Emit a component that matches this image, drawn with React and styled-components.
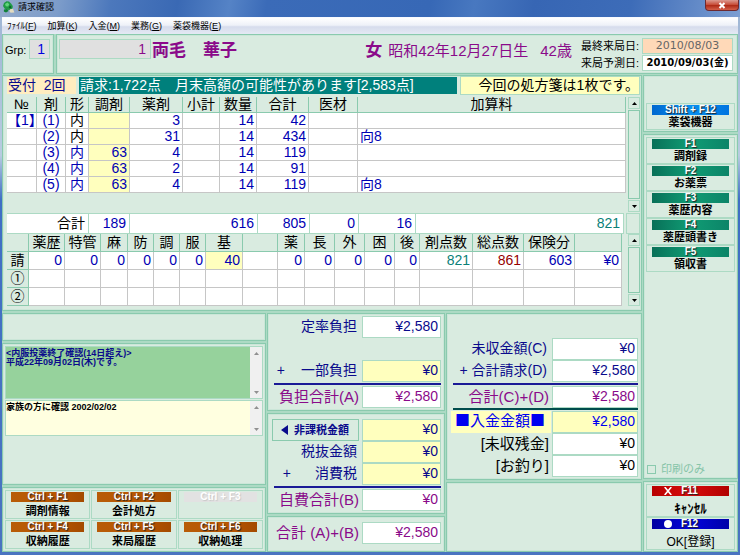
import React from 'react';
import styled, { createGlobalStyle } from 'styled-components';

const color = {
    face: '#d9ebe0',
    line: '#8acaae',
    soft: '#acdac4',
    grid: '#c6c6c6',
    yellow: '#ffffbe',
    navy: '#0a0a8c',
    blue: '#0000b4',
    purple: '#8a0a8a',
    teal: '#0a8078',
    red: '#960000',
};

const GlobalStyle = createGlobalStyle`
    * { box-sizing: border-box; }

    body {
        margin: 0;
        background: #4a74c0;
        font-family: "Liberation Sans", "Noto Sans CJK JP", sans-serif;
        font-size: 14px;
        line-height: 16px;
        color: #000;
    }

    button, input, textarea {
        font: inherit;
        color: inherit;
        margin: 0;
        padding: 0;
        border: 0;
        border-radius: 0;
        outline: 0;
    }
`;

const Window = styled.div`
    display: flex;
    flex-direction: column;
    min-height: 100vh;
    padding: 0 2px 3px;
    background: linear-gradient(#9db4d4, #b8cce0 28%, #3f6fc4 36%, #4a74c0);
`;

const TitleBar = styled.header`
    display: flex;
    align-items: flex-start;
    gap: 3px;
    height: 17px;
    margin: 0 -2px;
    padding-left: 2px;
    background: linear-gradient(100deg, #93aacb 0, #7c9cca 8%, #4c78bc 15%, #3a69b4 24%, #5583c6 31%,
        #3b6bb8 36%, #3768b6 58%, #4878c0 64%, #3766b4 72%, #3d6cb8 85%, #7c9ed2 100%);
`;

const Title = styled.h1`
    flex: 1;
    margin: 0;
    font-size: 9px;
    font-weight: 400;
    line-height: 14px;
`;

const CloseButton = styled.button`
    display: flex;
    align-items: center;
    justify-content: center;
    width: 34px;
    height: 11px;
    margin-right: 1px;
    border: 1px solid #6e2a30;
    border-top: 0;
    border-radius: 0 0 4px 4px;
    background: linear-gradient(#dc9a90, #c8503c 45%, #b02c18 55%, #d4604a);
`;

const MenuBar = styled.nav`
    display: flex;
    gap: 11px;
    height: 17px;
    padding: 0 5px;
    border-top: 1px solid #f8faff;
    background: linear-gradient(#fff, #eef1f8 45%, #d6dcec 55%, #e4e9f4);
`;

const MenuButton = styled.button`
    background: none;
    font-size: 9px;
    line-height: 15px;
    white-space: nowrap;
`;

const Panel = styled.section`
    border: 1px solid ${color.line};
    background: ${color.face};
    box-shadow: inset 0 0 0 1px #cbe6d8;
`;

const Header = styled.div`
    display: flex;
    gap: 2px;
    height: 41px;
    padding-bottom: 1px;
    background: ${color.soft};
`;

const GroupPanel = styled(Panel)`
    display: flex;
    align-items: flex-start;
    justify-content: space-between;
    width: 52px;
    padding: 4px 3px 0 2px;
`;

const GroupLabel = styled.label`
    font-size: 11px;
    line-height: 22px;
`;

const CodeInput = styled.input`
    width: ${props => props.$width}px;
    height: 20px;
    padding-right: 4px;
    border: 1px solid ${color.soft};
    background: #e0e0e0;
    color: ${props => props.$tone};
    text-align: right;
`;

const PatientPanel = styled(Panel)`
    flex: 1;
    display: flex;
    align-items: flex-start;
    padding: 3px 4px 0 2px;
`;

const CodeWrapper = styled.div`
    padding: 1px 0 0;
`;

const PatientName = styled.strong`
    flex: 1;
    padding-left: 1px;
    color: ${color.purple};
    font-size: 17px;
    line-height: 25px;
`;

const PatientInfo = styled.div`
    display: flex;
    gap: 12px;
    padding-right: 9px;
    color: ${color.purple};
    font-size: 15px;
    line-height: 25px;
`;

const Sex = styled.strong`
    margin-right: -6px;
    font-size: 17px;
`;

const VisitDates = styled.dl`
    display: grid;
    grid-template-columns: auto 91px;
    gap: 1px 3px;
    margin: 0;
    font-size: 11px;
    line-height: 16px;
`;

const DateLabel = styled.dt`
    text-align: right;
`;

const DateValue = styled.dd`
    height: 16px;
    margin: 0;
    border: 1px solid ${color.soft};
    background: ${props => (props.$last ? '#ffd9b8' : '#fff')};
    color: ${props => (props.$last ? '#666' : '#000')};
    font-family: "DejaVu Sans", "Noto Sans CJK JP", sans-serif;
    font-size: ${props => (props.$last ? 11 : 10)}px;
    font-weight: ${props => (props.$last ? 400 : 700)};
    line-height: 14px;
    text-align: center;
    white-space: nowrap;
`;

const Body = styled.div`
    flex: 1;
    display: flex;
    background: ${color.soft};
`;

const Main = styled.main`
    flex: 1;
    display: flex;
    flex-direction: column;
    gap: 2px;
    min-width: 0;
`;

const ClaimPanel = styled(Panel)`
    padding: 0 1px 4px 4px;
`;

const NoticeRow = styled.div`
    display: flex;
    align-items: center;
    gap: 3px;
    height: 19px;
    margin-bottom: 2px;
    white-space: nowrap;
`;

const Reception = styled.div`
    width: 69px;
    padding-left: 1px;
    background: #ffedc0;
    color: ${color.navy};
    line-height: 17px;
`;

const Alert = styled.div`
    flex: 1;
    padding-left: 1px;
    background: #00807c;
    color: #fff;
    line-height: 17px;
`;

const Prescription = styled.div`
    width: 180px;
    border: 1px solid ${color.soft};
    background: ${color.yellow};
    line-height: 17px;
    text-align: right;
`;

const TableFrame = styled.div`
    display: flex;
    align-items: stretch;
    gap: ${props => props.$gap}px;
    min-height: ${props => props.$height}px;
`;

const TableArea = styled.div`
    flex: 1;
    min-width: 0;
`;

const Table = styled.table`
    width: 100%;
    table-layout: fixed;
    border-collapse: separate;
    border-spacing: 0;
    line-height: ${props => props.$row - 1}px;
    white-space: nowrap;

    th, td {
        height: ${props => props.$row}px;
    }
`;

const Th = styled.th`
    padding: 0;
    overflow: hidden;
    border-right: 1px solid ${color.line};
    border-bottom: 1px solid ${color.line};
    background: ${color.face};
    font-weight: 400;
    text-align: center;
`;

const Td = styled.td`
    padding: 0 ${props => (props.$align === 'center' ? 0 : 2)}px;
    border-right: 1px solid ${color.grid};
    border-bottom: 1px solid ${color.grid};
    background: ${props => (props.$mark ? color.yellow : '#fff')};
    color: ${props => props.$tone || color.blue};
    text-align: ${props => props.$align || 'right'};
`;

const SumTable = styled(Table)`
    margin-top: 1px;

    td {
        border: 1px solid ${color.soft};
        border-left-width: 0;
        padding-right: 3px;
    }
`;

const SumEnd = styled.div`
    width: 14px;
    margin-top: 1px;
    border: 1px solid ${color.soft};
`;

const Scroll = styled.div`
    display: flex;
    flex-direction: column;
    gap: 1px;
    width: 12px;
    background: ${props => (props.$plain ? '#f0f0f0' : 'transparent')};
`;

const ScrollButton = styled.button`
    display: flex;
    align-items: center;
    justify-content: center;
    height: 12px;
    border: ${props => (props.$plain ? 0 : 1)}px solid ${color.soft};
    background: transparent;
    color: ${props => (props.$plain ? '#909090' : '#000')};
`;

const ScrollTrack = styled.div`
    flex: 1;
    border: ${props => (props.$plain ? 0 : 1)}px solid ${color.line};
`;

const Bottom = styled.div`
    flex: 1;
    display: grid;
    grid-template-columns: 264fr 178fr 196fr;
    gap: 1px;
`;

const Column = styled.div`
    display: flex;
    flex-direction: column;
    gap: 2px;
    min-width: 0;
`;

const EmptyPanel = styled(Panel)`
    height: ${props => (props.$height ? props.$height + 'px' : 'auto')};
    flex: ${props => (props.$height ? 'none' : 1)};
`;

const MemoPanel = styled(Panel)`
    flex: 1;
    padding: 2px;
`;

const Memo = styled.div`
    display: flex;
    height: ${props => props.$height}px;
    margin-bottom: 1px;
    border: 1px solid ${color.soft};
`;

const MemoText = styled.textarea`
    flex: 1;
    min-width: 0;
    padding-top: 2px;
    overflow: hidden;
    resize: none;
    background: ${props => props.$fill};
    color: ${props => props.$tone};
    font-size: 9px;
    font-weight: 700;
    line-height: 9px;
`;

const KeyPanel = styled(Panel)`
    display: grid;
    grid-template-columns: repeat(3, 1fr);
    gap: 1px;
    padding: 2px;
`;

const KeyButton = styled.button`
    display: flex;
    flex-direction: column;
    align-items: stretch;
    height: ${props => props.$height}px;
    padding: 1px 5px 0;
    border: 1px solid ${color.soft};
    background: ${color.face};
    font-size: ${props => props.$size || 11}px;
    font-weight: ${props => (props.$size === 12 ? 400 : 700)};
    line-height: 14px;
    text-align: center;
    white-space: nowrap;
`;

const keyFills = {
    orange: 'linear-gradient(90deg, #b85c08, #b85600 60%, #a44a00)',
    green: 'linear-gradient(90deg, #087058, #109c74 50%, #0c8468)',
    blue: 'linear-gradient(90deg, #0068d0, #0890f0 50%, #0074e0)',
    red: 'linear-gradient(90deg, #b80000, #d80c0c 50%, #b00000)',
    navy: 'linear-gradient(90deg, #0000a0, #0404dc 50%, #0000a8)',
    off: '#e2e2e2',
};

const KeyCap = styled.span`
    display: flex;
    align-items: center;
    justify-content: center;
    gap: 9px;
    height: 10px;
    margin-bottom: ${props => props.$space || 0}px;
    padding-right: ${props => (props.$space === 6 ? 19 : 0)}px;
    background: ${props => keyFills[props.$fill]};
    color: #fff;
    font-size: 10px;
    font-weight: 700;
    line-height: 10px;
    text-shadow: 1px 1px 1px ${props => (props.$fill === 'off' ? '#c8c8c8' : '#222')};
`;

const MoneyPanel = styled(Panel)`
    flex: ${props => (props.$grow ? 1 : 'none')};
    padding: ${props => props.$top}px 3px 2px 4px;
`;

const MoneyRow = styled.div`
    display: flex;
    align-items: stretch;
    height: 22px;
    margin-bottom: ${props => (props.$after || 0)}px;
    color: ${props => props.$tone};
`;

const MoneyLabel = styled.label`
    flex: 1;
    display: flex;
    justify-content: flex-end;
    gap: ${props => props.$gap || 0}px;
    margin-right: 1px;
    padding-right: ${props => props.$inset}px;
    background: ${props => (props.$mark ? color.yellow : 'transparent')};
    font-family: ${props => (props.$mark ? '"Noto Sans CJK JP", sans-serif' : 'inherit')};
    font-size: ${props => (props.$big ? 15 : 14)}px;
    line-height: ${props => (props.$mark ? 17 : 21)}px;
    white-space: nowrap;
`;

const MoneyInput = styled.input`
    width: ${props => (props.$wide ? 86 : 79)}px;
    padding: 0 2px 3px;
    border: 1px solid ${color.soft};
    background: ${props => (props.$mark ? color.yellow : '#fff')};
    text-align: right;
`;

const Rule = styled.hr`
    height: 2px;
    margin: ${props => (props.$tight ? 0 : 1)}px 0 1px 2px;
    border: 0;
    background: ${props => props.$tone};
`;

const TaxFreeButton = styled.button`
    flex: 1;
    display: flex;
    align-items: center;
    gap: 6px;
    margin-right: 3px;
    padding-left: 8px;
    border: 1px solid ${color.line};
    background: ${color.face};
    font-size: 11px;
    font-weight: 700;
`;

const Sidebar = styled.aside`
    display: flex;
    flex-direction: column;
    gap: 2px;
    width: 96px;
    padding-left: 1px;
`;

const SidePanel = styled(Panel)`
    display: flex;
    flex-direction: column;
    flex: ${props => (props.$grow ? 1 : 'none')};
    padding: ${props => props.$top}px 2px 1px;
`;

const CheckLabel = styled.label`
    display: flex;
    align-items: center;
    gap: 5px;
    margin-top: auto;
    padding-left: 1px;
    color: #86c4a8;
    font-size: 11px;
`;

const CheckBox = styled.input`
    appearance: none;
    width: 9px;
    height: 9px;
    border: 1px solid ${color.line};
`;

const menus = [['ﾌｧｲﾙ', 'F'], ['加算', 'K'], ['入金', 'M'], ['業務', 'G'], ['薬袋機器', 'E']];

const drugColumns = [
    ['№', 30], ['剤', 29], ['形', 23], ['調剤', 41], ['薬剤', 53], ['小計', 37],
    ['数量', 37], ['合計', 52], ['医材', 49], ['加算料', null],
];

const drugRows = [
    ['【1】', '(1)', '内', '', '3', '', '14', '42', '', ''],
    ['', '(2)', '内', '', '31', '', '14', '434', '', '向8'],
    ['', '(3)', '内', '63', '4', '', '14', '119', '', ''],
    ['', '(4)', '内', '63', '2', '', '14', '91', '', ''],
    ['', '(5)', '内', '63', '4', '', '14', '119', '', '向8'],
];

const feeColumns = [
    ['', 22], ['薬歴', 36], ['特管', 36], ['麻', 27], ['防', 26], ['調', 26], ['服', 26], ['基', 37],
    ['', 35], ['薬', 27], ['長', 30], ['外', 30], ['困', 30], ['後', 25], ['剤点数', 53],
    ['総点数', 51], ['保険分', 51], ['', null],
];

const feeRows = [
    ['請', '0', '0', '0', '0', '0', '0', '40', '', '0', '0', '0', '0', '0', '821', '861', '603', '¥0'],
    ['①', ...Array(17).fill('')],
    ['②', ...Array(17).fill('')],
];

const leftKeys = [
    ['Ctrl + F1', '調剤情報'], ['Ctrl + F2', '会計処方'], ['Ctrl + F3', ''],
    ['Ctrl + F4', '収納履歴'], ['Ctrl + F5', '来局履歴'], ['Ctrl + F6', '収納処理'],
];

const sideKeys = [
    ['F1', '調剤録'], ['F2', 'お薬票'], ['F3', '薬歴内容'], ['F4', '薬歴頭書き'], ['F5', '領収書'],
];

const AppIcon = () => (
    <svg width="13" height="14" viewBox="0 0 13 14" aria-hidden="true">
        <path d="M1 6 2 3 4.5 1.2 7 1.5 9 3.5 10.8 6 10.5 8.5 8 10 5 9.8 2.5 8.5Z" fill="#1f9a45" />
        <path d="M3 4 5.5 2.6 7.2 4.2 6.2 6.4 3.8 6.2Z" fill="#62d47c" />
        <path d="M2 9.4 5 9 6.6 11 4 12.4 1.8 11.4Z" fill="#128038" />
        <path d="M8 9.2 11 8.8 12.4 12.4 8.6 12.8 7.4 11Z" fill="#e4dcc0" />
        <path d="M7.8 5.5 9.6 7 8.2 8.4 6.8 7.4Z" fill="#0c602c" />
    </svg>
);

const Arrow = ({ up }) => (
    <svg width="5" height="3" viewBox="0 0 5 3" aria-hidden="true">
        <path d={up ? 'M0 3 2.5 0 5 3Z' : 'M0 0 5 0 2.5 3Z'} fill="currentColor" />
    </svg>
);

const ScrollBar = ({ plain }) => (
    <Scroll $plain={plain}>
        <ScrollButton $plain={plain} aria-label="上へ"><Arrow up /></ScrollButton>
        <ScrollTrack $plain={plain} />
        <ScrollButton $plain={plain} aria-label="下へ"><Arrow /></ScrollButton>
    </Scroll>
);

const Columns = ({ widths }) => (
    <colgroup>
        {widths.map((width, i) => <col key={i} width={width || undefined} />)}
    </colgroup>
);

const HeadRow = ({ columns }) => (
    <thead>
        <tr>
            {columns.map(([name], i) => <Th key={i} scope="col">{name}</Th>)}
        </tr>
    </thead>
);

const drugAlign = (i) => {
    if (i < 3) return 'center';
    return i === 9 ? 'left' : 'right';
}

const DrugTable = () => (
    <Table $row={16}>
        <Columns widths={drugColumns.map(column => column[1])} />
        <HeadRow columns={drugColumns} />
        <tbody>
            {drugRows.map((row, r) => (
                <tr key={r}>
                    {row.map((value, i) => (
                        <Td key={i} $align={drugAlign(i)} $mark={i === 3} $tone={i === 2 && r < 2 ? '#000' : null}>
                            {value}
                        </Td>
                    ))}
                </tr>
            ))}
        </tbody>
    </Table>
);

const TotalTable = () => (
    <SumTable $row={20}>
        <Columns widths={[82, 41, 128, 52, 49, 57, null]} />
        <tbody>
            <tr>
                <Td $tone="#000">合計</Td>
                <Td>189</Td>
                <Td>616</Td>
                <Td>805</Td>
                <Td>0</Td>
                <Td>16</Td>
                <Td $tone={color.teal}>821</Td>
            </tr>
        </tbody>
    </SumTable>
);

// by column of the fee table, the row name being column 0
const feeTones = { 14: color.teal, 15: color.red };

const FeeTable = () => (
    <Table $row={18}>
        <Columns widths={feeColumns.map(column => column[1])} />
        <HeadRow columns={feeColumns} />
        <tbody>
            {feeRows.map(([name, ...values], r) => (
                <tr key={r}>
                    <Th scope="row">{name}</Th>
                    {values.map((value, i) => (
                        <Td key={i} $mark={value === '40'} $tone={feeTones[i + 1]}>{value}</Td>
                    ))}
                </tr>
            ))}
        </tbody>
    </Table>
);

const Key = ({ cap, fill, height, size, space, icon, children }) => (
    <KeyButton $height={height} $size={size} disabled={fill === 'off'}>
        <KeyCap $fill={fill} $space={space}>{icon}{cap}</KeyCap>
        {children}
    </KeyButton>
);

const Money = ({ id, label, sign, gap, value, tone, mark, markLabel, big, wide, after, inset = 4 }) => (
    <MoneyRow $tone={tone} $after={after}>
        <MoneyLabel htmlFor={id} $gap={gap} $big={big} $mark={markLabel} $inset={inset}>
            {sign && <span>{sign}</span>}
            <span>{label}</span>
        </MoneyLabel>
        <MoneyInput id={id} $mark={mark} $wide={wide} defaultValue={value} />
    </MoneyRow>
);

const App = () => (
    <>
        <GlobalStyle />
        <Window>
            <TitleBar>
                <AppIcon />
                <Title>請求確認</Title>
                <CloseButton aria-label="閉じる">
                    <svg width="8" height="7" viewBox="0 0 8 7" aria-hidden="true">
                        <path d="M1.5 1 6.5 6M6.5 1 1.5 6" stroke="#fff" strokeWidth="2" />
                    </svg>
                </CloseButton>
            </TitleBar>
            <MenuBar>
                {menus.map(([name, key]) => (
                    <MenuButton key={key}>{name}(<u>{key}</u>)</MenuButton>
                ))}
            </MenuBar>
            <Header>
                <GroupPanel>
                    <GroupLabel htmlFor="group">Grp:</GroupLabel>
                    <CodeInput id="group" $width={21} $tone="#0000e0" defaultValue="1" />
                </GroupPanel>
                <PatientPanel>
                    <CodeWrapper>
                        <CodeInput $width={92} $tone={color.purple} aria-label="患者番号" defaultValue="1" />
                    </CodeWrapper>
                    <PatientName>両毛　華子</PatientName>
                    <PatientInfo>
                        <Sex>女</Sex>
                        <span>昭和42年12月27日生</span>
                        <span>42歳</span>
                    </PatientInfo>
                    <VisitDates>
                        <DateLabel>最終来局日:</DateLabel>
                        <DateValue $last>2010/08/03</DateValue>
                        <DateLabel>来局予測日:</DateLabel>
                        <DateValue>2010/09/03(金)</DateValue>
                    </VisitDates>
                </PatientPanel>
            </Header>
            <Body>
                <Main>
                    <ClaimPanel>
                        <NoticeRow>
                            <Reception>受付&nbsp; 2回</Reception>
                            <Alert>請求:1,722点　月末高額の可能性があります[2,583点]</Alert>
                            <Prescription>今回の処方箋は1枚です。</Prescription>
                        </NoticeRow>
                        <TableFrame $gap={2} $height={115}>
                            <TableArea><DrugTable /></TableArea>
                            <ScrollBar />
                        </TableFrame>
                        <TableFrame $gap={2} $height={21}>
                            <TableArea><TotalTable /></TableArea>
                            <SumEnd />
                        </TableFrame>
                        <TableFrame $gap={6} $height={72}>
                            <TableArea><FeeTable /></TableArea>
                            <ScrollBar />
                        </TableFrame>
                    </ClaimPanel>
                    <Bottom>
                        <Column>
                            <EmptyPanel $height={28} />
                            <MemoPanel>
                                <Memo $height={53}>
                                    <MemoText
                                        aria-label="服薬確認"
                                        $fill="#96d29c"
                                        $tone={color.navy}
                                        defaultValue={'<内服投薬終了確認(14日超え)>\n平成22年09月02日(木)です。'}
                                    />
                                    <ScrollBar plain />
                                </Memo>
                                <Memo $height={36}>
                                    <MemoText
                                        aria-label="メモ"
                                        $fill="#ffffe0"
                                        $tone="#000"
                                        defaultValue="家族の方に確認 2002/02/02"
                                    />
                                    <ScrollBar plain />
                                </Memo>
                            </MemoPanel>
                            <KeyPanel>
                                {leftKeys.map(([cap, name]) => (
                                    <Key key={cap} cap={cap} fill={name ? 'orange' : 'off'} height={29} space={2}>
                                        {name}
                                    </Key>
                                ))}
                            </KeyPanel>
                        </Column>
                        <Column>
                            <MoneyPanel $top={2}>
                                <Money id="rate" label="定率負担" value="¥2,580" tone={color.navy} after={22} />
                                <Money id="part" sign="+" gap={16} label="一部負担" value="¥0" tone={color.navy} mark />
                                <Rule $tone="#1a1a96" />
                                <Money id="sumA" label="負担合計(A)" value="¥2,580" tone={color.purple} big inset={2} />
                            </MoneyPanel>
                            <MoneyPanel $top={5}>
                                <MoneyRow $tone={color.navy}>
                                    <TaxFreeButton>
                                        <svg width="7" height="10" viewBox="0 0 7 10" aria-hidden="true">
                                            <path d="M7 0 7 10 0 5Z" fill="currentColor" />
                                        </svg>
                                        非課税金額
                                    </TaxFreeButton>
                                    <MoneyInput aria-label="非課税金額" $mark defaultValue="¥0" />
                                </MoneyRow>
                                <Money id="net" label="税抜金額" value="¥0" tone={color.navy} mark />
                                <Money id="tax" sign="+" gap={24} label="消費税" value="¥0" tone={color.navy} mark />
                                <Rule $tone="#1a1a96" />
                                <Money id="sumB" label="自費合計(B)" value="¥0" tone={color.purple} big inset={2} />
                            </MoneyPanel>
                            <MoneyPanel $top={5} $grow>
                                <Money id="sumAB" label="合計 (A)+(B)" value="¥2,580" tone={color.purple} big inset={2} />
                            </MoneyPanel>
                        </Column>
                        <Column>
                            <MoneyPanel $top={24}>
                                <Money id="unpaid" label="未収金額(C)" value="¥0" tone={color.navy} wide />
                                <Money id="bill" sign="+" gap={4} label="合計請求(D)" value="¥2,580" tone={color.navy} wide />
                                <Rule $tone="#1a1a96" />
                                <Money id="sumCD" label="合計(C)+(D)" value="¥2,580" tone={color.purple} big wide inset={2} />
                                <Rule $tone="#004c4c" $tight />
                                <Money id="paid" label="■入金金額■" value="¥2,580" tone="#0000f0" big wide mark markLabel inset={6} />
                                <Money id="rest" label="[未収残金]" value="¥0" tone="#000" big wide inset={2} />
                                <Money id="change" label="[お釣り]" value="¥0" tone="#000" big wide inset={2} />
                            </MoneyPanel>
                            <EmptyPanel />
                        </Column>
                    </Bottom>
                </Main>
                <Sidebar>
                    <SidePanel $top={27}>
                        <Key cap="Shift + F12" fill="blue" height={27}>薬袋機器</Key>
                    </SidePanel>
                    <SidePanel $top={2} $grow>
                        {sideKeys.map(([cap, name]) => (
                            <Key key={cap} cap={cap} fill="green" height={27}>{name}</Key>
                        ))}
                        <CheckLabel>
                            <CheckBox type="checkbox" disabled />
                            印刷のみ
                        </CheckLabel>
                    </SidePanel>
                    <SidePanel $top={2}>
                        <Key
                            cap="F11"
                            fill="red"
                            height={33}
                            size={13}
                            space={6}
                            icon={(
                                <svg width="8" height="8" viewBox="0 0 8 8" aria-hidden="true">
                                    <path d="M.7 0 7.3 8M7.3 0 .7 8" stroke="#fff" strokeWidth="1.6" />
                                </svg>
                            )}
                        >
                            ｷｬﾝｾﾙ
                        </Key>
                        <Key
                            cap="F12"
                            fill="navy"
                            height={33}
                            size={12}
                            space={6}
                            icon={(
                                <svg width="8" height="8" viewBox="0 0 8 8" aria-hidden="true">
                                    <circle cx="4" cy="4" r="4" fill="#fff" />
                                </svg>
                            )}
                        >
                            OK[登録]
                        </Key>
                    </SidePanel>
                </Sidebar>
            </Body>
        </Window>
    </>
);

export default App;
